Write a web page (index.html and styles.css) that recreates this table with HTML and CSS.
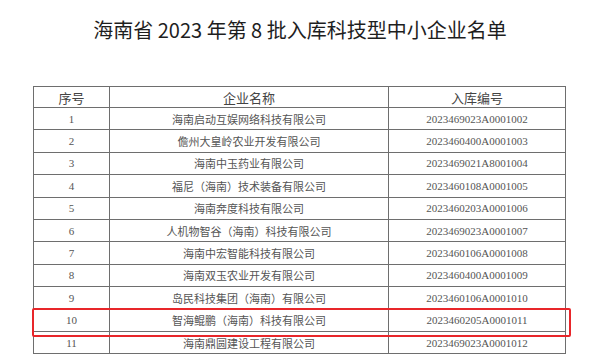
FILE: index.html
```html
<!DOCTYPE html>
<html lang="zh-CN">
<head>
    <meta charset="UTF-8">
    <meta name="viewport" content="width=device-width, initial-scale=1.0">
    <title>海南省2023年第8批入库科技型中小企业名单</title>
    <link rel="stylesheet" href="styles.css">
</head>
<body>
    <h1 class="title">海南省 2023 年第 8 批入库科技型中小企业名单</h1>

    <table class="list">
        <thead>
            <tr>
                <th class="col-no">序号</th>
                <th class="col-name">企业名称</th>
                <th class="col-code">入库编号</th>
            </tr>
        </thead>
        <tbody>
            <tr><td>1</td><td>海南启动互娱网络科技有限公司</td><td>2023469023A0001002</td></tr>
            <tr><td>2</td><td>儋州大皇岭农业开发有限公司</td><td>2023460400A0001003</td></tr>
            <tr><td>3</td><td>海南中玉药业有限公司</td><td>2023469021A8001004</td></tr>
            <tr><td>4</td><td>福尼（海南）技术装备有限公司</td><td>2023460108A0001005</td></tr>
            <tr><td>5</td><td>海南奔度科技有限公司</td><td>2023460203A0001006</td></tr>
            <tr><td>6</td><td>人机物智谷（海南）科技有限公司</td><td>2023469023A0001007</td></tr>
            <tr><td>7</td><td>海南中宏智能科技有限公司</td><td>2023460106A0001008</td></tr>
            <tr><td>8</td><td>海南双玉农业开发有限公司</td><td>2023460400A0001009</td></tr>
            <tr><td>9</td><td>岛民科技集团（海南）有限公司</td><td>2023460106A0001010</td></tr>
            <tr class="marked"><td>10</td><td>智海鲲鹏（海南）科技有限公司</td><td>2023460205A0001011</td></tr>
            <tr><td>11</td><td>海南鼎圆建设工程有限公司</td><td>2023469023A0001012</td></tr>
        </tbody>
    </table>
</body>
</html>
```

FILE: styles.css
```css
* {
    margin: 0;
    padding: 0;
    box-sizing: border-box;
}

body {
    background-color: #fff;
    font-family: "Liberation Serif", "Noto Sans CJK SC", serif;
}

.title {
    height: 60px;
    line-height: 60px;
    text-align: center;
    font-family: "Noto Sans CJK SC", sans-serif;
    font-size: 20px;
    font-weight: 400;
    color: #1e1e1e;
}

.list {
    margin: 26px 0 0 33px;
    width: 532px;
    border-collapse: collapse;
    table-layout: fixed;
    color: #555;
}

.list th,
.list td {
    border: 1px solid #6e6e6e;
    text-align: center;
    font-weight: 400;
    white-space: nowrap;
}

.list th {
    height: 21px;
    font-size: 13px;
    color: #444;
}

.list td {
    height: 22.4px;
    font-size: 11px;
}

.col-no {
    width: 76px;
}

.col-name {
    width: 279px;
}

.col-code {
    width: 177px;
}

.marked {
    position: relative;
}

.marked td:first-child {
    position: relative;
}

/* red highlight around row 10 */
.marked td:first-child::after {
    content: "";
    position: absolute;
    top: -2px;
    left: -2px;
    width: 535px;
    height: 25px;
    border: 2px solid #e8262a;
    border-radius: 2px;
    pointer-events: none;
}
```
